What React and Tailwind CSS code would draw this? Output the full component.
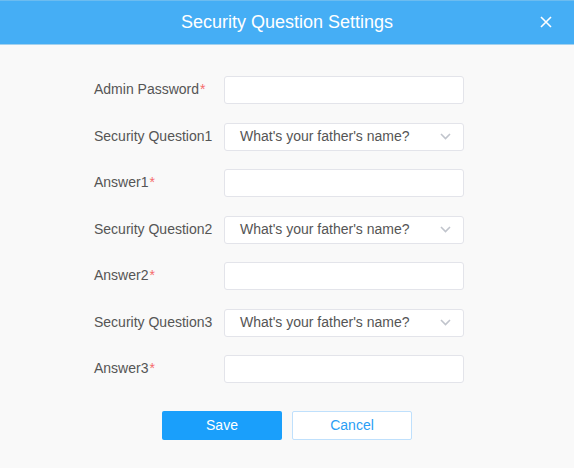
import React from 'react';

const questions = ["What's your father's name?"];

const Label = ({ children, required }) => (
  <div className="w-[130px] shrink-0 text-[14px] text-[#555] -mt-[1px]">
    {children}
    {required && <span className="text-[#f56c6c] ml-[1px]">*</span>}
  </div>
);

const TextInput = () => (
  <input type="password" className="w-[240px] h-[28px] bg-white border border-[#e3e4ea] rounded-[3px] px-3 text-[14px] outline-none" />
);

const Select = () => (
  <div className="w-[240px] h-[28px] bg-white border border-[#e3e4ea] rounded-[3px] pl-[15px] pr-[12px] flex items-center justify-between text-[14px] text-[#555]">
    <span>{questions[0]}</span>
    <svg width="11" height="7" viewBox="0 0 11 7" fill="none" stroke="#c0c4cc" strokeWidth="1.6">
      <path d="M1 1l4.5 4.5L10 1" />
    </svg>
  </div>
);

const rows = [
  { label: 'Admin Password', required: true, type: 'input' },
  { label: 'Security Question1', type: 'select' },
  { label: 'Answer1', required: true, type: 'input' },
  { label: 'Security Question2', type: 'select' },
  { label: 'Answer2', required: true, type: 'input' },
  { label: 'Security Question3', type: 'select' },
  { label: 'Answer3', required: true, type: 'input' },
];

export default function App() {
  return (
    <div className="w-[574px] h-[468px] bg-[#f9f9f9] font-['Liberation_Sans',Arial,sans-serif]">
      <div className="h-[45px] bg-[#45aef5] border-t border-t-[#6cbcf0] border-b border-b-[#a3d1ee] relative flex items-center justify-center">
        <span className="text-white text-[18px]">Security Question Settings</span>
        <svg className="absolute right-[22px] top-[15px]" width="12" height="12" viewBox="0 0 12 12" stroke="white" strokeWidth="1.6">
          <path d="M1 1l10 10M11 1L1 11" />
        </svg>
      </div>
      <div className="pt-[31px] pl-[94px] flex flex-col gap-[18.5px]">
        {rows.map((r) => (
          <div key={r.label} className="flex items-center">
            <Label required={r.required}>{r.label}</Label>
            {r.type === 'input' ? <TextInput /> : <Select />}
          </div>
        ))}
      </div>
      <div className="flex justify-center gap-[10px] mt-[28px]">
        <button className="w-[120px] h-[29px] bg-[#1a9ffb] text-white text-[14px] rounded-[2px]">Save</button>
        <button className="w-[120px] h-[29px] bg-white border border-[#bfe0fc] text-[#2a9ef5] text-[14px] rounded-[2px]">Cancel</button>
      </div>
    </div>
  );
}
